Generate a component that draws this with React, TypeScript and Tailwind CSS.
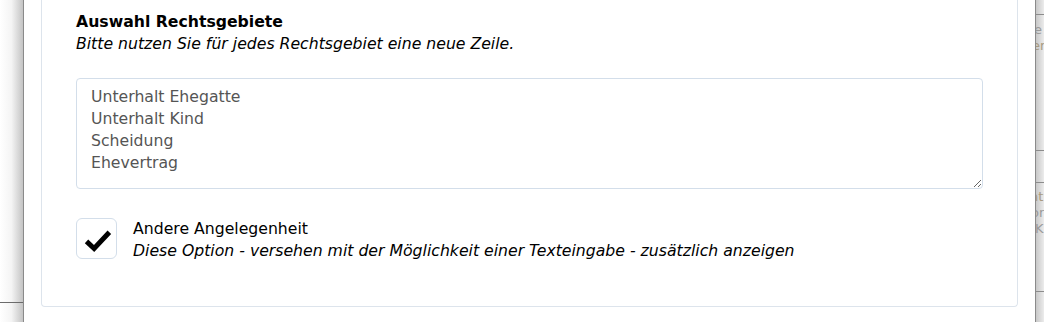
import React from 'react';

const rechtsgebiete = ['Unterhalt Ehegatte', 'Unterhalt Kind', 'Scheidung', 'Ehevertrag'];

const App: React.FC = () => {
  return (
    <div
      className="flex w-[1044px] h-[322px] overflow-hidden bg-white text-[15.7px] text-black"
      style={{ fontFamily: '"DejaVu Sans", Verdana, sans-serif' }}
    >
      {/* Backdrop left */}
      <div className="flex flex-col w-[24px] shrink-0 border-r border-[#8a8a8a] bg-gradient-to-r from-white via-[#f4f4f4] to-[#c4c4c4]">
        <div className="h-[302px]"></div>
        <div className="h-px bg-[#6b6b6b]"></div>
      </div>

      {/* Modal */}
      <div className="flex-1 bg-white px-[17px]">
        <div className="h-[307px] border-x border-b border-[#dde4ec] rounded-b-[4px] pl-[34px] pr-[34px] pt-[11px]">
          {/* Header */}
          <div className="leading-[22px]">
            <h3 className="font-bold">Auswahl Rechtsgebiete</h3>
            <p className="italic">Bitte nutzen Sie für jedes Rechtsgebiet eine neue Zeile.</p>
          </div>

          {/* Textarea */}
          <textarea
            readOnly
            defaultValue={rechtsgebiete.join('\n')}
            className="mt-[23px] block w-full h-[111px] rounded-[4px] border border-[#d3deea] px-[14px] py-[7px] text-[15.7px] leading-[22px] text-[#555] outline-none resize-y"
            style={{ fontFamily: '"DejaVu Sans", Verdana, sans-serif' }}
          />

          {/* Checkbox */}
          <div className="mt-[29px] flex items-start gap-[16px]">
            <div className="w-[41px] h-[41px] shrink-0 rounded-[6px] border border-[#d3deea] flex items-center justify-center">
              <svg width="41" height="41" viewBox="0 0 41 41">
                <polyline
                  points="10,23.5 18,31 34,14"
                  fill="none"
                  stroke="#000"
                  strokeWidth="5.2"
                  strokeLinejoin="miter"
                  strokeLinecap="butt"
                />
              </svg>
            </div>
            <div className="leading-[22px]">
              <div>Andere Angelegenheit</div>
              <div className="italic">Diese Option - versehen mit der Möglichkeit einer Texteingabe - zusätzlich anzeigen</div>
            </div>
          </div>
        </div>
      </div>

      {/* Backdrop right */}
      <div className="w-[9px] shrink-0 border-l border-[#8a8a8a] bg-gradient-to-r from-[#c8c8c8] to-[#ececec] overflow-hidden text-[13px] leading-[16px] text-[#9a9a9a] whitespace-nowrap">
        <div className="h-[15px] border-b border-[#8c8c8c]"></div>
        <div className="pt-[7px] -ml-[2px]">e s</div>
        <div className="-ml-[4px] text-[#a89a80]">er</div>
        <div className="h-[97px] border-b border-[#8c8c8c]"></div>
        <div className="h-[32px] border-b border-[#8c8c8c]"></div>
        <div className="pt-[6px] -ml-[6px] text-[#a89a80]">nt</div>
        <div className="-ml-[5px]">or</div>
        <div className="-ml-[1px]">K</div>
        <div className="h-[55px] border-b border-[#8c8c8c]"></div>
      </div>
    </div>
  );
};

export default App;
